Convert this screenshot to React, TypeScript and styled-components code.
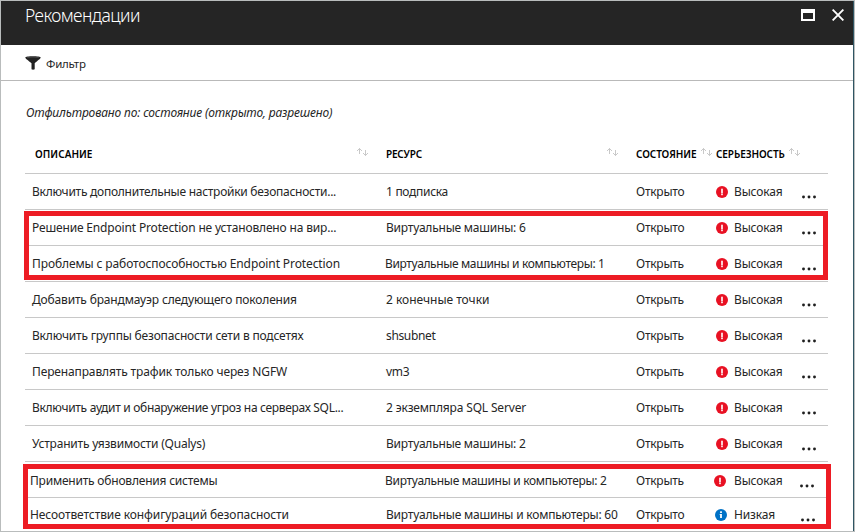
import React from "react";
import styled, { createGlobalStyle } from "styled-components";

const GlobalStyle = createGlobalStyle`
  * { box-sizing: border-box; }
  body { margin: 0; background: #fff; }
`;

const Blade = styled.main`
  position: relative;
  display: flex;
  flex-direction: column;
  width: 855px;
  height: 532px;
  overflow: hidden;
  background: #fff;
  border: 1px solid #b9bcbc;
  color: #262626;
  font: 12px/16px "Noto Sans", "Open Sans", sans-serif;
  white-space: nowrap;
`;

const Inner = styled.div`
  flex: 1;
  display: flex;
  flex-direction: column;
  min-height: 0;
  border-right: 1px solid #2f5563;
`;

const TitleBar = styled.header`
  flex: none;
  display: flex;
  justify-content: space-between;
  height: 44px;
  padding: 2px 9px 0 24px;
  background: #252525;
  color: #fff;
`;

const Title = styled.h1`
  margin: 0;
  font-size: 17.5px;
  font-weight: 300;
  line-height: 25px;
  letter-spacing: -0.56px;
`;

const WindowButtons = styled.div`
  display: flex;
  align-items: flex-start;
  gap: 17px;
  padding-top: 6px;
  svg { display: block; }
`;

const Toolbar = styled.div`
  flex: none;
  display: flex;
  align-items: center;
  gap: 5px;
  height: 36px;
  padding: 1px 0 0 24px;
  border-bottom: 1px solid #b9b9b9;
  font-size: 11.5px;
  letter-spacing: -0.25px;
`;

const ToolbarLabel = styled.span`
  padding-top: 2px;
`;

const FilterNote = styled.p`
  flex: none;
  margin: 24px 0 26px 25px;
  font-style: italic;
  letter-spacing: -0.153px;
`;

const Table = styled.section`
  width: 803px;
  margin-left: 24px;
`;

const HeadRow = styled.div`
  display: grid;
  grid-template-columns: 351px 250px 80px 122px;
  align-items: start;
  height: 27px;
  border-bottom: 1px solid #c8c8c8;
  color: #000;
  font-size: 10px;
  font-weight: 600;
  line-height: 14px;
`;

const HeadCell = styled.div<{ $indent: number; $end: number; $track: number }>`
  display: flex;
  justify-content: space-between;
  padding-left: ${(p) => p.$indent}px;
  margin-right: ${(p) => p.$end}px;
  letter-spacing: ${(p) => p.$track}px;
  svg { flex: none; }
`;

const Row = styled.div<{ $height: number; $lift: number; $rule: boolean }>`
  display: grid;
  grid-template-columns: 360px 250px 81px 112px;
  align-items: center;
  height: ${(p) => p.$height}px;
  padding-top: ${(p) => p.$lift}px;
  border-bottom: ${(p) => (p.$rule ? "1px solid #c8c8c8" : "none")};
`;

const Cell = styled.span<{ $pad: number; $track: number }>`
  padding-left: ${(p) => p.$pad}px;
  letter-spacing: ${(p) => p.$track}px;
`;

const Severity = styled.div<{ $shift: number }>`
  display: grid;
  grid-template-columns: ${(p) => 18 - p.$shift}px 67px 1fr;
  align-items: center;
  margin-left: ${(p) => p.$shift}px;
  letter-spacing: -0.15px;
  svg { display: block; }
`;

const More = styled.span<{ $shift: number }>`
  margin: 10px 0 0 ${(p) => p.$shift}px;
`;

const Highlight = styled.div<{ $x: number; $y: number; $w: number; $h: number }>`
  position: absolute;
  left: ${(p) => p.$x}px;
  top: ${(p) => p.$y}px;
  width: ${(p) => p.$w}px;
  height: ${(p) => p.$h}px;
  border: 5px solid #ed1c24;
`;

const Sort = () => (
  <svg width="12" height="11" viewBox="0 0 12 11" fill="none" stroke="#c9c9c9">
    <path d="M3.5 1.2V7M1 4L3.5 1.5L6 4M9.5 3V8.8M7 6L9.5 8.5L12 6" />
  </svg>
);

const High = () => (
  <svg width="12" height="12" viewBox="0 0 12 12">
    <circle cx="6" cy="6" r="6" fill="#e81123" />
    <rect x="5.1" y="2.7" width="1.8" height="4.5" fill="#fff" fillOpacity=".9" />
    <rect x="5.1" y="7.2" width="1.8" height=".6" fill="#fff" fillOpacity=".5" />
    <rect x="5.1" y="7.8" width="1.8" height="1.4" fill="#fff" fillOpacity=".9" />
  </svg>
);

const Info = () => (
  <svg width="12" height="12" viewBox="0 0 12 12">
    <circle cx="6" cy="6" r="6" fill="#0072c6" />
    <rect x="5.1" y="2.3" width="1.8" height="1.7" fill="#fff" />
    <path d="M4.6 5H6.9V9H5.1V5.8H4.6Z" fill="#fff" />
  </svg>
);

const Dots = () => (
  <svg width="16" height="4" viewBox="0 0 16 4" fill="#1f1f1f">
    <circle cx="2.5" cy="2" r="1.45" />
    <circle cx="8" cy="2" r="1.45" />
    <circle cx="13.5" cy="2" r="1.45" />
  </svg>
);

interface Item {
  text: string;
  track: number;
  resource: string;
  resourceTrack: number;
  state: string;
  low?: boolean;
  x?: number;
  resourceX?: number;
  shift?: number;
  height?: number;
  lift?: number;
}

const items: Item[] = [
  { text: "Включить дополнительные настройки безопасности...", track: -0.265, resource: "1 подписка", resourceTrack: -0.3, state: "Открыто" },
  { text: "Решение Endpoint Protection не установлено на вир...", track: -0.165, resource: "Виртуальные машины: 6", resourceTrack: -0.217, state: "Открыто" },
  { text: "Проблемы с работоспособностью Endpoint Protection", track: -0.105, resource: "Виртуальные машины и компьютеры: 1", resourceTrack: -0.37, state: "Открыть", resourceX: -1 },
  { text: "Добавить брандмауэр следующего поколения", track: -0.165, resource: "2 конечные точки", resourceTrack: -0.02, state: "Открыть" },
  { text: "Включить группы безопасности сети в подсетях", track: -0.183, resource: "shsubnet", resourceTrack: -0.35, state: "Открыть" },
  { text: "Перенаправлять трафик только через NGFW", track: -0.135, resource: "vm3", resourceTrack: -0.3, state: "Открыть" },
  { text: "Включить аудит и обнаружение угроз на серверах SQL...", track: -0.31, resource: "2 экземпляра SQL Server", resourceTrack: -0.16, state: "Открыть" },
  { text: "Устранить уязвимости (Qualys)", track: -0.2, resource: "Виртуальные машины: 2", resourceTrack: -0.217, state: "Открыть" },
  { text: "Применить обновления системы", track: -0.207, resource: "Виртуальные машины и компьютеры: 2", resourceTrack: -0.31, state: "Открыть", x: -2, resourceX: -1, shift: -2, lift: 2 },
  { text: "Несоответствие конфигураций безопасности", track: -0.1, resource: "Виртуальные машины и компьютеры: 60", resourceTrack: -0.21, state: "Открыто", low: true, x: -2, shift: -1, height: 33 },
];

export default function App() {
  return (
    <>
      <GlobalStyle />
      <Blade>
        <Inner>
          <TitleBar>
            <Title>Рекомендации</Title>
            <WindowButtons>
              <svg width="14" height="12" viewBox="0 0 14 12">
                <path fill="#fff" fillRule="evenodd" d="M0 0H14V12H0ZM2 4V10H12V4Z" />
              </svg>
              <svg width="12" height="12" viewBox="0 0 12 12" stroke="#fff" strokeWidth="1.9">
                <path d="M.6.6L11.4 11.4M11.4.6L.6 11.4" />
              </svg>
            </WindowButtons>
          </TitleBar>
          <Toolbar>
            <svg width="16" height="14" viewBox="0 0 16 14">
              <path fill="#222" d="M.3 1.5C.3-.1 15.7-.1 15.7 1.5C15.7 2.6 12.5 4.7 9.7 7.3V13.2Q8 14.1 6.5 13.2V7.3C3.5 4.7.3 2.6.3 1.5Z" />
              <path d="M2.2 1.5Q8 .6 13.8 1.5" stroke="#666" strokeWidth=".5" fill="none" />
            </svg>
            <ToolbarLabel>Фильтр</ToolbarLabel>
          </Toolbar>
          <FilterNote>Отфильтровано по: состояние (открыто, разрешено)</FilterNote>
          <Table>
            <HeadRow>
              <HeadCell $indent={10} $end={8} $track={0.05}>ОПИСАНИЕ<Sort /></HeadCell>
              <HeadCell $indent={10} $end={8} $track={-0.2}>РЕСУРС<Sort /></HeadCell>
              <HeadCell $indent={10} $end={-6} $track={-0.08}>СОСТОЯНИЕ<Sort /></HeadCell>
              <HeadCell $indent={10} $end={28} $track={-0.088}>СЕРЬЕЗНОСТЬ<Sort /></HeadCell>
            </HeadRow>
            {items.map((item, index) => (
              <Row
                key={item.text}
                $height={item.height ?? 36}
                $lift={item.lift ?? 0}
                $rule={index < items.length - 1}
              >
                <Cell $pad={7 + (item.x ?? 0)} $track={item.track}>{item.text}</Cell>
                <Cell $pad={1 + (item.resourceX ?? 0)} $track={item.resourceTrack}>{item.resource}</Cell>
                <Cell $pad={1} $track={-0.25}>{item.state}</Cell>
                <Severity $shift={item.shift ?? 0}>
                  {item.low ? <Info /> : <High />}
                  {item.low ? "Низкая" : "Высокая"}
                  <More $shift={item.shift ?? 0}><Dots /></More>
                </Severity>
              </Row>
            ))}
          </Table>
        </Inner>
        <Highlight $x={23} $y={210} $w={804} $h={69} />
        <Highlight $x={22} $y={463} $w={808} $h={65} />
      </Blade>
    </>
  );
}
